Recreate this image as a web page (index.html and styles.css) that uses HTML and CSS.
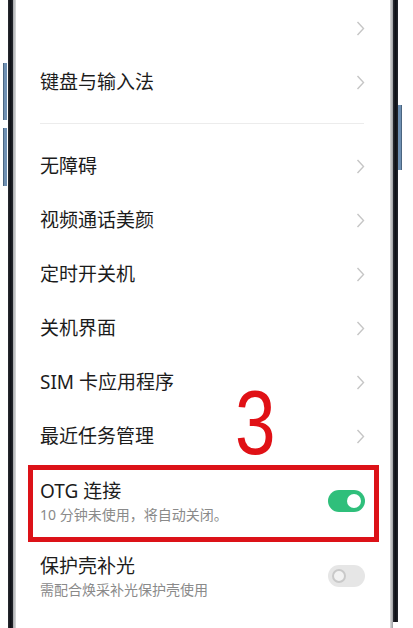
FILE: index.html
```html
<!DOCTYPE html>
<html lang="zh-CN">
<head>
<meta charset="utf-8">
<title>设置</title>
<link rel="stylesheet" href="styles.css">
</head>
<body>
<div class="frame-left">
  <div class="gutter-l"></div>
  <div class="keys-l">
    <div class="key key-1"></div>
    <div class="key key-2"></div>
  </div>
  <div class="rail-dark"></div>
  <div class="rail-gray"></div>
</div>

<main class="screen">
  <div class="row"><span class="title"></span><svg class="chev" viewBox="0 0 9 15"><polyline points="1.5,1 7.5,7.5 1.5,14"/></svg></div>
  <div class="row"><span class="title">键盘与输入法</span><svg class="chev" viewBox="0 0 9 15"><polyline points="1.5,1 7.5,7.5 1.5,14"/></svg></div>
  <div class="divider"></div>
  <div class="row"><span class="title">无障碍</span><svg class="chev" viewBox="0 0 9 15"><polyline points="1.5,1 7.5,7.5 1.5,14"/></svg></div>
  <div class="row"><span class="title">视频通话美颜</span><svg class="chev" viewBox="0 0 9 15"><polyline points="1.5,1 7.5,7.5 1.5,14"/></svg></div>
  <div class="row"><span class="title">定时开关机</span><svg class="chev" viewBox="0 0 9 15"><polyline points="1.5,1 7.5,7.5 1.5,14"/></svg></div>
  <div class="row"><span class="title">关机界面</span><svg class="chev" viewBox="0 0 9 15"><polyline points="1.5,1 7.5,7.5 1.5,14"/></svg></div>
  <div class="row"><span class="title">SIM 卡应用程序</span><svg class="chev" viewBox="0 0 9 15"><polyline points="1.5,1 7.5,7.5 1.5,14"/></svg></div>
  <div class="row row-anchor"><span class="title">最近任务管理</span><svg class="chev" viewBox="0 0 9 15"><polyline points="1.5,1 7.5,7.5 1.5,14"/></svg>
    <span class="step">3</span>
  </div>
  <div class="row row-two row-anchor">
    <div class="texts">
      <span class="title">OTG 连接</span>
      <span class="sub">10 分钟未使用，将自动关闭。</span>
    </div>
    <span class="toggle on"><span class="knob"></span></span>
    <span class="highlight"></span>
  </div>
  <div class="row row-two">
    <div class="texts">
      <span class="title">保护壳补光</span>
      <span class="sub">需配合焕采补光保护壳使用</span>
    </div>
    <span class="toggle off"><span class="knob"></span></span>
  </div>
</main>

<div class="frame-right">
  <div class="rail-gray"></div>
  <div class="rail-dark short"></div>
  <div class="keys-r">
    <div class="key key-3"></div>
  </div>
  <div class="gutter-r"></div>
</div>
</body>
</html>
```
FILE: styles.css
```css
html, body {
  margin: 0;
  padding: 0;
  background: #ffffff;
}
body {
  width: 413px;
  height: 628px;
  overflow: hidden;
  display: flex;
  font-family: "Noto Sans", "Noto Sans CJK SC", sans-serif;
  color: #1c1c1c;
}

/* phone frame */
.frame-left {
  width: 16px;
  display: flex;
  flex-shrink: 0;
}
.gutter-l { width: 3px; }
.keys-l {
  width: 5px;
  display: flex;
  flex-direction: column;
}
.key {
  width: 4px;
  background: #6f90b3;
  border: 0 solid #4a6580;
  box-sizing: border-box;
}
.key-1 { margin-top: 63px; height: 57px; border-left-width: 1px; }
.key-2 { margin-top: 8px; height: 58px; border-left-width: 1px; }
.rail-dark {
  width: 5px;
  height: 628px;
  background: linear-gradient(90deg, #2a2d33, #0f1117 50%, #23262c);
}
.rail-dark.short { height: 622px; }
.rail-gray {
  width: 3px;
  background: linear-gradient(90deg, #a6a8ab, #d9dadb);
}
.frame-right .rail-gray {
  background: linear-gradient(90deg, #dcdcdc, #9c9ea2);
}
.frame-right {
  width: 23px;
  display: flex;
  flex-shrink: 0;
}
.keys-r {
  width: 4px;
  display: flex;
  flex-direction: column;
}
.key-3 { margin-top: 105px; height: 65px; border-right-width: 1px; }
.gutter-r { flex: 1; }

/* screen */
.screen {
  flex: 1;
  padding: 1px 24px 0 24px;
  display: flex;
  flex-direction: column;
}
.row {
  height: 54px;
  flex-shrink: 0;
  display: flex;
  align-items: center;
  justify-content: space-between;
}
.row-anchor { position: relative; }
.row-two { height: 75px; }
.title {
  font-size: 19px;
  line-height: 24px;
  color: #1c1c1c;
}
.texts {
  display: flex;
  flex-direction: column;
  padding-top: 2px;
}
.sub {
  font-size: 14px;
  line-height: 20px;
  margin-top: 2px;
  color: #8a8a8a;
}
.chev {
  width: 9px;
  height: 15px;
  margin-right: 1px;
  fill: none;
  stroke: #c6c6c6;
  stroke-width: 1.4;
}
.divider {
  height: 1px;
  background: #ececec;
  margin: 14px 2px 15px 0;
  flex-shrink: 0;
}

/* toggles */
.toggle {
  width: 37px;
  height: 22px;
  border-radius: 11px;
  display: flex;
  align-items: center;
  box-sizing: border-box;
  margin-right: 1px;
}
.toggle.on {
  background: #2fbf7b;
  justify-content: flex-end;
  padding-right: 4px;
}
.toggle.on .knob {
  width: 14px;
  height: 14px;
  border-radius: 50%;
  background: #ffffff;
}
.toggle.off {
  background: #e6e6e6;
  justify-content: flex-start;
  padding-left: 4px;
}
.toggle.off .knob {
  width: 14px;
  height: 14px;
  border-radius: 50%;
  box-sizing: border-box;
  border: 2px solid #c9c9c9;
  background: #f2f2f2;
}

/* annotations */
.highlight {
  position: absolute;
  left: -12px;
  right: -13px;
  top: 2px;
  bottom: -4px;
  border: 5px solid #dc1218;
}
.step {
  position: absolute;
  left: 195px;
  top: -32px;
  font-family: "Liberation Sans", Arial, sans-serif;
  font-size: 91px;
  line-height: 91px;
  color: #e01116;
  transform: scaleX(0.8);
  transform-origin: 0 0;
  -webkit-text-stroke: 0;
}
```
